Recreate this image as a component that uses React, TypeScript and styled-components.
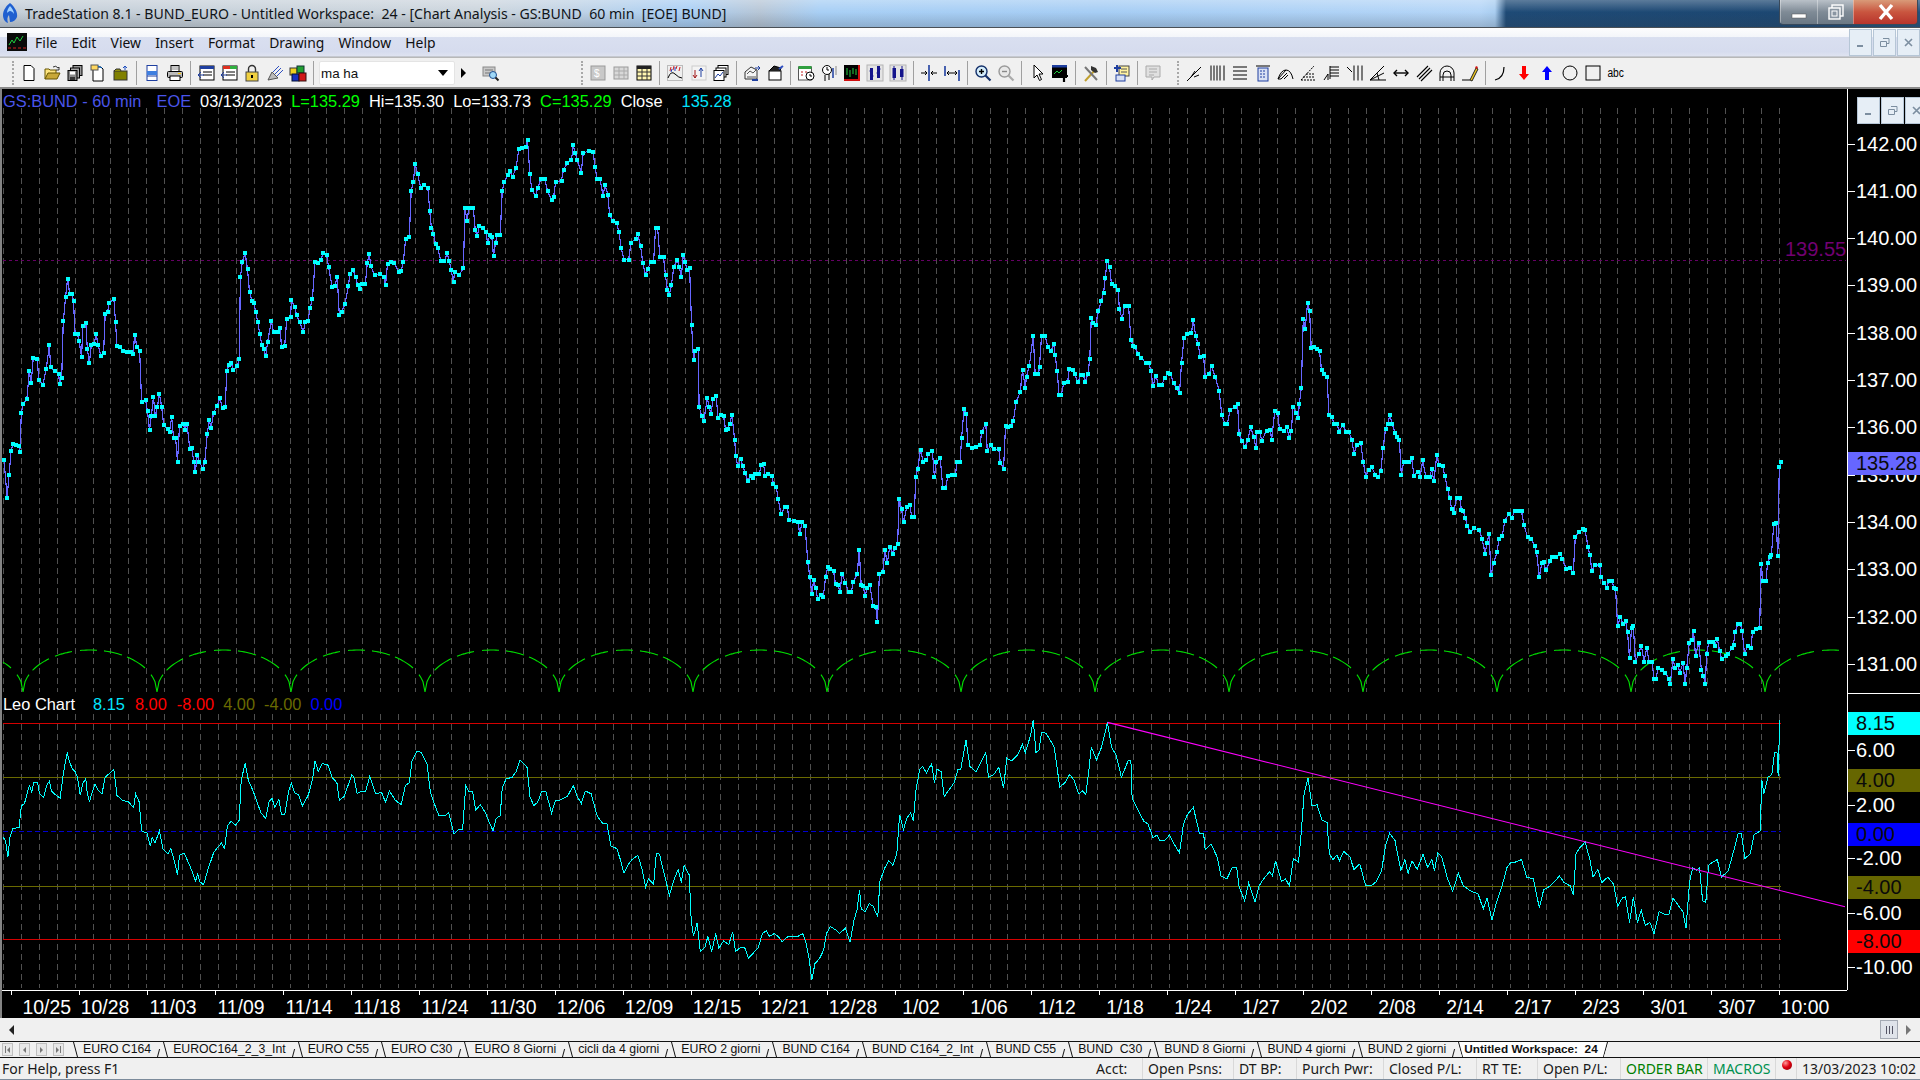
import React from 'react';
import styled, { createGlobalStyle } from 'styled-components';

const Global = createGlobalStyle`
  html, body { margin: 0; padding: 0; width: 1920px; height: 1080px; overflow: hidden; background: #000; }
  #root { width: 1920px; height: 1080px; }
  * { box-sizing: border-box; }
`;

const UI = '"Noto Sans", "Open Sans", sans-serif';
const ARIAL = '"Liberation Sans", Arial, sans-serif';

const Page = styled.div`
  width: 1920px; height: 1080px; display: flex; flex-direction: column; overflow: hidden;
  font-family: ${ARIAL};
`;

/* ---------- title bar ---------- */
const TitleBar = styled.div`
  height: 28px; flex: none; display: flex; align-items: center; position: relative; padding: 0 0 1px 2px;
  border-bottom: 1px solid #4a5056;
  background:
    linear-gradient(180deg, rgba(255,255,255,.28) 0, rgba(255,255,255,0) 45%, rgba(50,60,70,.22) 100%),
    linear-gradient(90deg, #c4ced8 0, #ccd5dd 480px, #c2d3e4 560px, #a9cff5 690px, #b7c6d6 760px, #a8cff5 820px, #a6cdf4 1100px, #b4d5f7 1480px, #a9cdf0 1495px, #1e4a76 1506px, #1c4772 1780px, #23507c 100%);
`;
const TitleIcon = styled.svg` width: 17px; height: 22px; flex: none; `;
const TitleText = styled.div`
  font-family: ${UI}; font-size: 14.1px; color: #101418; white-space: pre; margin-left: 6px;
`;
const WinControls = styled.div`
  margin-left: auto; display: flex; height: 25px; align-self: flex-start; margin-right: 2px;
  border: 1px solid #39495a; border-top: 0; border-radius: 0 0 4px 4px; overflow: hidden;
`;
const WinBtn = styled.div<{ $w: number; $close?: boolean }>`
  width: ${p => p.$w}px; height: 100%; display: flex; align-items: center; justify-content: center;
  border-left: 1px solid rgba(255,255,255,.35);
  background: ${p => p.$close
    ? 'linear-gradient(180deg, #d99a78 0, #c9553f 50%, #b8342c 100%)'
    : 'linear-gradient(180deg, #b9c1c8 0, #7f8b96 50%, #6b7884 100%)'};
  svg { width: 24px; height: 18px; }
`;

/* ---------- menu ---------- */
const MenuBar = styled.div`
  height: 29px; flex: none; display: flex; align-items: center; padding-left: 7px;
  background: linear-gradient(180deg, #fdfdfe 0, #f4f6fa 31%, #d9dff0 34%, #d6dcee 85%, #dfe3f0 100%);
  border-bottom: 1px solid #c4c8d0;
`;
const MenuIcon = styled.svg` width: 20px; height: 18px; flex: none; margin-right: 1px; `;
const MenuItem = styled.span`
  font-family: ${UI}; font-size: 13.9px; color: #101010; padding: 0 7.1px;
`;
const MdiGroup = styled.div<{ $top?: boolean }>`
  display: flex; gap: 1px;
  ${p => p.$top
    ? 'position: absolute; top: 8px; right: -8px; z-index: 3;'
    : 'margin-left: auto; height: 27px;'}
`;
const MdiBtn = styled.div`
  width: 23px; height: 27px; display: flex; align-items: center; justify-content: center;
  background: #e6eef6; border: 1px solid #b6c6d6;
  svg { width: 11px; height: 11px; }
`;

/* ---------- toolbar ---------- */
const ToolBar = styled.div`
  height: 32px; flex: none; display: flex; align-items: center; padding: 1px 0 0 9px;
  background: #f0f0f0; border-top: 1px solid #b8b8b8; border-bottom: 2px solid #8a8a8a;
`;
const Grip = styled.div<{ $ml?: number }>`
  width: 8px; height: 24px; flex: none; margin-left: ${p => p.$ml ?? 0}px; position: relative;
  &::before { content: ''; position: absolute; left: 3px; top: 0; bottom: 0; border-left: 2px dotted #a8a8a8; }
`;
const ToolBtn = styled.div`
  width: 23px; height: 24px; flex: none; display: flex; align-items: center; justify-content: center;
  svg { width: 18px; height: 18px; }
`;
const ToolSep = styled.div`
  width: 8px; height: 24px; flex: none; position: relative;
  &::before { content: ''; position: absolute; left: 4px; top: 0; bottom: 0; border-left: 1px solid #a0a0a0; }
`;
const Combo = styled.div`
  width: 136px; height: 24px; flex: none; margin-left: 2px; background: #fff; border-radius: 2px; border: 1px solid #e4e4e4;
  display: flex; align-items: center; justify-content: space-between; padding: 0 6px 0 1px;
  font-family: ${ARIAL}; font-size: 13.4px; color: #111;
  &::after { content: ''; border: 5px solid transparent; border-top: 6px solid #000; border-bottom: 0; }
`;
const ComboGo = styled.div`
  width: 16px; height: 24px; flex: none; margin-right: 8px; display: flex; align-items: center; justify-content: center;
  &::before { content: ''; border: 5px solid transparent; border-left: 5px solid #000; border-right: 0; }
`;

/* ---------- chart ---------- */
const Chart = styled.div`
  height: 929px; flex: none; background: #000; border-left: 2px solid #848484; position: relative;
  display: flex; flex-direction: column;
`;
const PlotRow = styled.div` height: 901px; flex: none; display: flex; `;
const Canvas = styled.div` width: 1845px; flex: none; position: relative; `;
const CanvasSvg = styled.svg` display: block; width: 1845px; height: 901px; `;
const Legend = styled.div<{ $top: number }>`
  position: absolute; left: 1px; top: ${p => p.$top}px; height: 22px; display: flex; align-items: center;
  font-size: 16.4px; white-space: pre;
`;
const LegendItem = styled.span<{ $c: string; $ml: number }>` color: ${p => p.$c}; margin-left: ${p => p.$ml}px; `;
const LevelTag = styled.div`
  position: absolute; left: 1783px; top: 148px; font-size: 20px; line-height: 24px; color: #720072;
`;
const YAxis = styled.div`
  width: 73px; flex: none; position: relative; border-left: 1px solid #fff;
`;
const AxisDivider = styled.div` position: absolute; left: 0; right: 0; top: 604px; border-top: 1px solid #fff; `;
const AxisLabel = styled.div<{ $bg?: string }>`
  position: absolute; left: 0; right: 0; height: 23px; padding-left: 8px; font-size: 20px; line-height: 23px; white-space: pre;
  color: ${p => (p.$bg ? '#0a0a0a' : '#fff')};
  background: ${p => p.$bg ?? 'transparent'};
  ${p => (p.$bg ? '' : `&::before { content: ''; position: absolute; left: 0; top: 11px; width: 7px; border-top: 1px solid #fff; }`)}
`;
const XAxisRow = styled.div`
  width: 1845px; height: 28px; flex: none; display: flex; padding-left: 1px; border-top: 1px solid #fff;
`;
const XCell = styled.div`
  width: 68px; flex: none; position: relative; text-align: center; color: #fff; font-size: 19.4px; line-height: 32px; white-space: nowrap;
  &:first-child { text-align: right; }
  &::before { content: ''; position: absolute; left: 8px; top: 0; height: 4px; border-left: 1px solid #fff; }
`;

/* ---------- scroll / tabs / status ---------- */
const HScroll = styled.div`
  height: 23px; flex: none; background: #f0f0f0; display: flex; align-items: center; padding: 0 9px;
`;
const ScrollLeft = styled.div` border: 5px solid transparent; border-right: 5px solid #222; border-left: 0; `;
const ScrollThumb = styled.div`
  margin-left: auto; width: 18px; height: 19px; background: #dfe3ea; border: 1px solid #a4aab4; display: flex; align-items: center; justify-content: center; gap: 2px;
  i { display: block; width: 1px; height: 8px; background: #556; }
`;
const ScrollRight = styled.div` margin: 0 0 0 8px; border: 5px solid transparent; border-left: 5px solid #777; border-right: 0; `;
const TabsBar = styled.div`
  height: 17px; flex: none; display: flex; background: #f0f0f0; border-top: 1px solid #111; border-bottom: 1px solid #111;
`;
const TabNav = styled.div` width: 72px; flex: none; display: flex; align-items: center; padding-left: 2px; gap: 6px; `;
const NavBtn = styled.div<{ $dir: 'l' | 'r'; $bar?: 'l' | 'r' }>`
  width: 11px; height: 13px; background: #e8e8e8; border: 1px solid #c0c0c0; display: flex; align-items: center; justify-content: center; gap: 1px;
  flex-direction: ${p => (p.$bar === 'r' ? 'row-reverse' : 'row')};
  &::after { content: ''; border: 3px solid transparent; ${p => (p.$dir === 'l' ? 'border-right: 3px solid #777; border-left: 0;' : 'border-left: 3px solid #777; border-right: 0;')} }
  ${p => (p.$bar ? `&::before { content: ''; width: 1px; height: 7px; background: #777; }` : '')}
`;
const Tab = styled.div<{ $active?: boolean }>`
  position: relative; padding: 0 ${p => (p.$active ? '11px 0 7px' : '11px')}; font-size: ${p => (p.$active ? 11.8 : 12.28)}px; line-height: 15px; white-space: pre; color: #111;
  font-weight: ${p => (p.$active ? 700 : 400)};
  ${p => (p.$active ? 'background: #fff; clip-path: polygon(0 0, 100% 0, calc(100% - 5px) 100%, 5px 100%);' : '')}
  &::before { content: ''; position: absolute; left: 3px; top: 0; height: 100%; border-left: 1px solid #111; transform: skewX(15deg); }
  &::after { content: ''; position: absolute; right: 3px; bottom: 0; height: ${p => (p.$active ? '100%' : '55%')}; border-left: 1px solid #111; transform: skewX(-15deg); }
`;
const StatusBar = styled.div`
  height: 22px; flex: none; display: flex; align-items: center; background: #f0f0f0; border-bottom: 1px solid #7c8b9b;
  font-family: ${UI}; font-size: 14px; color: #1a1a1a;
`;
const StatusHelp = styled.div` padding-left: 2px; margin-right: auto; white-space: nowrap; `;
const StatusCell = styled.div<{ $w: number; $c?: string }>`
  width: ${p => p.$w}px; height: 100%; flex: none; display: flex; align-items: center; padding-left: 5px; white-space: nowrap;
  color: ${p => p.$c ?? '#1a1a1a'};
  border-right: 1px solid #d9d9d9;
  &:last-child { border-right: 0; }
`;
const Led = styled.div`
  width: 10px; height: 10px; border-radius: 50%; margin: -8px 0 0 1px;
  background: radial-gradient(circle at 35% 30%, #ff9a9a 0, #e00010 45%, #800008 100%);
`;

/* ---------- icons ---------- */
const S = (p: any) => <path fill="none" stroke="#000" {...p} />;
const CandleBg = <rect x="1" y="1" width="16" height="16" fill="#e4e4e4" stroke="#b4b4b4" />;
const ICONS: Record<string, React.ReactNode> = {
  new: <path d="M4 1.5h7l3 3v12H4z" fill="#fff" stroke="#000" />,
  open: <><path d="M2 15V5h4l1 1h6v3" fill="#ffe680" stroke="#665500" /><path d="M2 15l3-6h12l-3 6z" fill="#c8a838" stroke="#665500" /><path d="M10 3q3-2 5 1l1-1v3h-3" fill="none" stroke="#333" /></>,
  save: <><rect x="7" y="1.5" width="9" height="10" fill="#999" stroke="#000" /><rect x="4.5" y="4" width="9" height="10" fill="#aaa" stroke="#000" /><rect x="2" y="6.5" width="9" height="10" fill="#888" stroke="#000" /><rect x="4" y="7.5" width="5" height="3" fill="#fff" /><rect x="4" y="13" width="5" height="3" fill="#333" /></>,
  note: <><path d="M4 3h8l2 2v12H4z" fill="#fff" stroke="#000" /><rect x="2" y="1" width="7" height="5" fill="#ffd860" stroke="#555" /><path d="M9 2l4 2" stroke="#06c" /></>,
  arch: <><rect x="2" y="7" width="13" height="9" fill="#808000" stroke="#333" /><path d="M2 7l2-2h4l1 2" fill="#909010" stroke="#333" /><path d="M13 6V2m-2 2l2-2 2 2" stroke="#2050c0" fill="none" /></>,
  prev: <><rect x="4" y="1.5" width="10" height="15" fill="#fff" stroke="#1f3fa0" /><rect x="4" y="7" width="10" height="4" fill="#3f7fe0" /><path d="M4 12h10" stroke="#1f3fa0" /></>,
  print: <><rect x="5" y="1.5" width="8" height="6" fill="#fff" stroke="#000" /><path d="M5 3h8M5 5h8" stroke="#888" /><rect x="1.5" y="7.5" width="15" height="6" rx="1" fill="#bbb" stroke="#000" /><rect x="4" y="12" width="10" height="4.5" fill="#fff" stroke="#000" /><rect x="12" y="9" width="3" height="1" fill="#fc0" /></>,
  win1: <><rect x="3" y="2" width="14" height="14" fill="#fff" stroke="#000" /><rect x="3" y="2" width="14" height="3" fill="#1f3fa0" /><path d="M6 8h9M6 11h9" stroke="#000" /><path d="M1 11h6M1 11l3-3M1 11l3 3" stroke="#1f3fa0" fill="none" /></>,
  win2: <><rect x="3" y="2" width="14" height="14" fill="#fff" stroke="#000" /><rect x="3" y="2" width="7" height="3" fill="#e03020" /><rect x="10" y="2" width="7" height="3" fill="#30b040" /><path d="M6 8h9M6 11h9" stroke="#000" /><path d="M1 11h6M1 11l3-3M1 11l3 3" stroke="#1f3fa0" fill="none" /></>,
  lock: <><path d="M5.5 8V5a3.5 3.5 0 017 0v3" fill="none" stroke="#333" strokeWidth="1.4" /><rect x="3" y="8" width="12" height="9" fill="#f0d040" stroke="#444" /><rect x="8" y="11" width="2" height="3" fill="#000" /></>,
  sat: <><path d="M2 16l4-8 6 6z" fill="#bbb" stroke="#555" /><path d="M7 8l6-6M9 10l6-6M11 12l6-6" stroke="#2f4fc0" /></>,
  cubes: <><rect x="1" y="4" width="7" height="7" fill="#f0d020" stroke="#333" /><rect x="8" y="2" width="7" height="7" fill="#20a030" stroke="#133" /><rect x="3" y="10" width="7" height="7" fill="#1830c0" stroke="#013" /><rect x="10" y="9" width="7" height="8" fill="#d01818" stroke="#311" /></>,
  find: <><rect x="1" y="3" width="12" height="9" fill="#c8c8c8" stroke="#888" /><path d="M3 6h8M3 9h8" stroke="#777" /><circle cx="11" cy="11" r="3.5" fill="#9fd8f8" stroke="#1f4f90" /><path d="M13.5 13.5l3 3" stroke="#222" strokeWidth="2" /></>,
  gcalc: <><rect x="2" y="2" width="14" height="14" fill="#c8c8c8" stroke="#999" /><text x="5" y="13" fontSize="10" fill="#fff" fontFamily="Liberation Sans">$</text></>,
  gtab: <><rect x="2" y="3" width="14" height="12" fill="#d8d8d8" stroke="#999" /><path d="M2 7h14M2 11h14M7 3v12M12 3v12" stroke="#aaa" /></>,
  ytab: <><rect x="2" y="2" width="14" height="14" fill="#fff6b0" stroke="#000" /><rect x="2" y="2" width="14" height="3" fill="#222" /><path d="M2 8h14M2 12h14M7 5v11M12 5v11" stroke="#333" /></>,
  wave: <><rect x="1.5" y="1.5" width="15" height="15" fill="#eee" stroke="#bbb" /><path d="M2 14q3-8 7-4t7 4" stroke="#000" fill="none" /><path d="M4 7l1-4M7 6l1-4M10 5l1-3M13 7l1-4" stroke="#d02020" /><path d="M5 8l1-3M9 7l0-4" stroke="#2040c0" /></>,
  updn: <><rect x="3" y="2" width="14" height="14" fill="#f4f4f4" stroke="#ccc" /><path d="M6 6v8m-2-3l2 3 2-3" stroke="#a01818" fill="none" /><path d="M12 13V4m-2 3l2-3 2 3" stroke="#1f3fa0" fill="none" /></>,
  stack: <><rect x="6" y="1.5" width="10" height="9" fill="#fff" stroke="#000" /><rect x="4" y="4" width="10" height="9" fill="#fff" stroke="#000" /><rect x="2" y="6.5" width="10" height="10" fill="#fff" stroke="#000" /><path d="M3 14l3-4 2 2 3-4" stroke="#1f3fa0" fill="none" /></>,
  dchart: <><path d="M2 8l6-5 6 3v9H2z" fill="#f4f4f4" stroke="#333" /><path d="M4 10l3-3 3 2 3-3M4 13h9" stroke="#555" fill="none" /><path d="M12 4h5m-2-2l2 2-2 2" stroke="#1f3fa0" fill="none" /><path d="M9 16h6" stroke="#1f3fa0" strokeWidth="2" /></>,
  dbox: <><rect x="3" y="7" width="12" height="9" fill="#fff" stroke="#000" /><path d="M3 7l5-5 7 2-1 3" fill="#222" stroke="#000" /><path d="M13 5l4-3" stroke="#2f4fc0" strokeWidth="2" /></>,
  cal: <><rect x="1.5" y="3" width="13" height="13" fill="#fff" stroke="#555" /><rect x="1.5" y="2" width="13" height="3" fill="#30a040" /><path d="M4 8h2M8 8h2M4 11h2" stroke="#c02020" /><circle cx="13" cy="12" r="4" fill="#fff" stroke="#000" /><path d="M13 10v2h2" stroke="#000" fill="none" /></>,
  clock: <><circle cx="7" cy="6" r="4.5" fill="#fff" stroke="#000" /><path d="M7 3v3h2" stroke="#000" fill="none" /><path d="M5 11v6M9 10v6" stroke="#000" /><path d="M13 4v10" stroke="#1f3fa0" strokeWidth="1.5" /><path d="M16 2v9" stroke="#888" /></>,
  blk: <><rect x="1" y="1" width="16" height="16" fill="#000" /><rect x="15" y="1" width="2" height="16" fill="#d01010" /><rect x="1" y="15" width="16" height="2" fill="#d01010" /><path d="M4 4v7M7 6v7M10 4v6M13 5v6" stroke="#20d040" /></>,
  bars: <>{CandleBg}<path d="M5.5 4v12M12.5 2v12" stroke="#14148c" strokeWidth="3" /><path d="M3.5 7h2M12.5 5h2M5.5 12h2M10.5 9h2" stroke="#14148c" /></>,
  cand: <>{CandleBg}<rect x="3.5" y="4" width="3.5" height="10" fill="#14148c" /><rect x="11" y="5" width="3.5" height="8" fill="#14148c" /><path d="M5 2v14M13 2v14" stroke="#14148c" /></>,
  pull: <><path d="M9 1v16" stroke="#1f3fa0" strokeWidth="1.6" /><path d="M1 9h6M5 7l2 2-2 2M17 9h-6M13 7l-2 2 2 2" stroke="#000" fill="none" /></>,
  push: <><path d="M2 2v10M16 6v11" stroke="#1f3fa0" strokeWidth="1.6" /><path d="M4 9h5M6 7L4 9l2 2M14 9H9M12 7l2 2-2 2" stroke="#000" fill="none" /></>,
  zin: <><circle cx="7.5" cy="7.5" r="5.5" fill="#d4ecfa" stroke="#14306a" strokeWidth="1.4" /><path d="M5 7.5h5M7.5 5v5" stroke="#000" strokeWidth="1.4" /><path d="M11.5 11.5l5 5" stroke="#14306a" strokeWidth="2.2" /></>,
  zout: <><circle cx="7.5" cy="7.5" r="5.5" fill="#e8e8e8" stroke="#9a9a9a" strokeWidth="1.4" /><path d="M5 7.5h5" stroke="#888" strokeWidth="1.4" /><path d="M11.5 11.5l5 5" stroke="#aaa" strokeWidth="2.2" /></>,
  arrow: <path d="M6 1v13l3-3 2.5 5.5 2-1L11 10h4z" fill="#fff" stroke="#000" />,
  blkt: <><rect x="1" y="2" width="15" height="12" fill="#000" /><rect x="1" y="1" width="15" height="2.5" fill="#1f3fa0" /><path d="M3 10l3-3 2 2 3-3" stroke="#20d040" fill="none" /><path d="M9 12h8M13 12v6" stroke="#000" strokeWidth="2.2" /></>,
  tools: <><path d="M3 17L14 5" stroke="#c0a030" strokeWidth="2" /><path d="M9 2l5 2 2 4-3 1-4-3z" fill="#333" /><path d="M3 3l12 13" stroke="#777" strokeWidth="2" /></>,
  plusdoc: <><rect x="6" y="2" width="10" height="10" fill="#fff2a0" stroke="#444" /><path d="M8 5h6M8 8h6" stroke="#555" /><path d="M4 1v7M1 4h7" stroke="#1f3fa0" strokeWidth="2" /><rect x="3" y="11" width="9" height="6" fill="#d8e0f4" stroke="#1f3fa0" /></>,
  chat: <><path d="M2 2h14v11h-6l-2 3v-3H2z" fill="#e0e0e0" stroke="#aaa" /><path d="M5 5h8M5 8h8M5 11h5" stroke="#aaa" /></>,
  fork: <S d="M2 17L16 3M6 13l4-6M9 13l5-2" />,
  vlines: <S d="M3 1.5v15M6 1.5v15M9 1.5v15M12 1.5v15M16 1.5v15" />,
  hlines: <S d="M2 3h14M2 7h14M2 11h14M2 15h14" />,
  calc: <><path d="M2 2h14" stroke="#000" /><rect x="4" y="4" width="10" height="13" fill="#d8e0f4" stroke="#1f3fa0" /><path d="M6 7h6M6 10h6M6 13h6" stroke="#1f3fa0" strokeDasharray="2 1" /></>,
  fan: <S d="M1 15q3-9 8-9t7 9M1 15l8-9M4 15l6-6M7 15l4-4M1 15h3" />,
  tri: <S d="M1 16h15M1 16L14 2M3 13h11M6 10h8" strokeDasharray="2 1" />,
  retr: <S d="M1 16l4-6v6M7 3h9M7 6h9M7 9h9M7 12h9M7 2v13" />,
  gann: <S d="M1 3l5 5M8 1.5v15M12 1.5v15M16 1.5v15" />,
  ang: <S d="M1 16h16M1 16L15 2M1 16l14-7M8 9l2 7" />,
  lr: <><path d="M2 9h14" stroke="#000" strokeWidth="1.4" /><path d="M5 6L2 9l3 3M13 6l3 3-3 3" fill="none" stroke="#000" strokeWidth="1.4" /></>,
  par: <S d="M2 13L13 2M4 15L15 4M6 17L17 6" strokeWidth="1.1" />,
  arcs: <S d="M2 17V9a7 7 0 0114 0v8M5 17V11a4 4 0 018 0v6M2 13h14" />,
  pen: <><path d="M1 16h8" stroke="#000" /><path d="M9 16l6-12 2 1-6 12z" fill="#f0c820" stroke="#222" /><path d="M14 4l1-2 2 1-1 2" fill="#d01818" /></>,
  curve: <S d="M3 16q9-2 9-13" strokeWidth="1.2" />,
  rdown: <path d="M7 2h4v8h3l-5 6-5-6h3z" fill="#ff0000" />,
  bup: <path d="M7 16h4V8h3L9 2 4 8h3z" fill="#0000ff" />,
  circ: <circle cx="9" cy="9" r="7" fill="none" stroke="#000" />,
  sq: <rect x="2" y="2" width="14" height="14" fill="none" stroke="#000" />,
};

const Ico = ({ n }: { n: string }) => (
  <ToolBtn><svg viewBox="0 0 18 18">{ICONS[n]}</svg></ToolBtn>
);
const AbcText = styled.span` font-size: 12px; color: #000; transform: scaleX(.85); font-family: ${ARIAL}; `;

/* ---------- traced data ---------- */
const PRICE1 = '10,601 18,670 23,628 28,585 33,573 40,574 48,576 50,587 54,515 59,500 68,490 74,440 79,462 84,416 94,417 98,455 108,465 117,435 125,392 128,432 138,440 148,445 151,463 156,452 160,348 166,305 171,271 176,298 182,298 186,312 190,372 196,372 200,384 206,414 210,358 217,352 221,400 226,425 231,392 238,390 243,372 248,392 255,412 262,406 266,336 272,332 276,316 288,308 292,350 296,394 303,396 310,403 320,404 330,405 336,408 341,373 346,395 353,402 358,495 368,492 373,512 378,547 383,521 388,487 393,522 398,505 403,481 409,505 414,538 424,545 429,550 434,523 439,561 444,561 449,605 454,540 463,536 468,547 473,535 480,582 485,580 490,605 494,623 499,592 504,605 513,617 518,605 524,555 529,529 534,543 540,516 549,503 556,489 563,507 569,505 574,440 579,428 585,425 590,438 600,431 605,417 608,268 613,240 620,224 626,254 631,295 637,312 642,316 647,332 652,350 657,372 662,392 667,400 672,411 677,386 686,348 692,368 703,368 708,360 712,395 720,394 725,345 735,340 737,310 745,322 750,338 758,350 767,368 772,350 779,348 784,325 790,308 797,240 803,243 812,236 817,224 826,228 831,250 840,286 847,284 853,268 858,337 864,332 872,318 881,285 885,262 893,255 899,268 904,282 910,290 915,280 924,280 929,242 934,226 938,248 947,265 960,262 970,268 975,282 980,245 989,240 997,243 1008,258 1015,257 1020,240 1026,198 1035,195 1040,112 1045,95 1050,62 1056,80 1064,105 1073,100 1082,105 1087,148 1091,178 1096,190 1102,208 1107,215 1115,238 1124,238 1131,225 1136,238 1141,255 1147,277 1150,258 1160,265 1172,252 1176,142 1181,165 1186,142 1197,142 1202,183 1207,193 1212,175 1222,178 1228,185 1233,205 1239,192 1244,195 1248,230 1253,205 1258,192 1265,192 1270,112 1275,95 1285,82 1290,75 1296,85 1305,70 1312,35 1320,32 1330,30 1334,18 1340,80 1345,110 1355,120 1360,105 1368,90 1378,90 1385,112 1395,128 1400,122 1405,95 1420,92 1425,72 1435,60 1445,55 1450,28 1455,42 1460,55 1470,78 1475,42 1490,38 1500,40 1505,68 1510,90 1518,90 1525,120 1530,100 1537,118 1542,155 1550,165 1560,170 1565,185';
const PRICE2 = '3,215 10,237 22,236 28,205 40,198 45,190 52,212 58,243 65,265 70,254 78,240 85,240 90,178 95,178 101,232 110,232 115,265 120,292 125,300 130,283 136,250 145,236 150,250 155,267 160,228 165,240 170,255 176,252 181,355 186,420 190,402 198,400 200,505 207,522 212,530 221,488 225,505 230,517 236,490 243,484 248,525 256,520 262,522 267,547 273,545 278,535 283,520 290,565 293,595 298,613 305,600 310,612 317,625 323,640 330,630 335,635 342,627 352,627 357,610 363,608 367,630 375,627 384,630 388,645 395,650 400,672 407,700 417,688 423,688 428,710 440,713 450,715 455,737 460,715 468,722 475,788 480,815 485,845 490,820 495,835 500,855 508,848 514,852 520,815 525,797 532,800 540,803 545,828 552,830 556,843 562,810 570,825 578,843 585,843 590,823 600,810 605,765 610,830 615,832 620,850 625,835 632,830 640,868 647,870 651,897 656,810 665,805 670,765 676,790 682,760 690,772 695,762 702,755 706,672 712,690 717,715 725,688 733,683 738,706 744,706 748,632 753,618 760,583 767,605 775,602 780,590 790,586 795,632 800,605 810,598 816,652 823,652 830,630 840,628 848,628 853,605 860,605 864,562 870,508 875,518 880,575 890,580 900,578 910,575 915,550 925,535 929,585 937,575 945,582 958,582 962,607 970,617 975,540 980,542 988,540 995,530 1002,495 1012,478 1018,438 1025,470 1028,450 1035,430 1045,375 1050,445 1058,445 1061,432 1066,375 1075,375 1082,395 1090,402 1098,390 1100,410 1106,440 1110,483 1116,483 1122,462 1132,460 1136,436 1146,437 1150,445 1158,460 1165,447 1172,447 1176,460 1183,445 1188,418 1192,342 1197,352 1203,355 1210,330 1217,312 1223,297 1227,270 1232,238 1238,250 1243,280 1252,285 1260,292 1263,327 1270,345 1276,320 1286,320 1292,382 1297,393 1302,395 1310,408 1318,415 1330,425 1338,425 1343,440 1348,467 1355,448 1362,465 1370,465 1378,452 1385,443 1392,445 1400,462 1408,470 1415,480 1420,425 1426,380 1433,372 1445,370 1450,347 1456,375 1462,390 1467,413 1476,412 1480,450 1490,445 1496,430 1505,450 1515,475 1522,520 1530,535 1536,535 1543,510 1555,505 1562,500 1566,555';
const PRICE3 = '5,567 13,578 20,565 27,542 35,560 40,580 43,550 50,550 55,567 67,548 77,547 80,565 88,512 95,515 100,545 112,548 118,542 125,562 130,548 134,505 142,515 147,525 150,500 155,470 160,345 165,362 171,315 176,330 180,397 188,395 195,400 201,402 206,438 213,445 220,450 225,520 232,523 238,535 246,535 250,550 260,537 268,550 275,550 283,565 288,590 295,575 305,570 312,605 318,632 325,620 333,615 342,628 350,632 356,622 362,580 368,545 375,535 378,520 385,535 392,553 397,560 403,565 408,628 414,605 423,605 428,605 434,598 440,630 450,623 456,632 462,602 470,632 480,632 485,618 490,640 498,592 503,610 512,612 518,630 525,655 530,670 535,690 540,698 548,670 555,670 560,692 565,695 570,708 575,722 582,733 592,726 605,730 612,745 620,772 625,752 630,737 635,812 641,790 650,770 655,745 663,740 670,712 680,700 687,707 695,695 705,695 712,695 718,720 727,742 737,745 745,758 750,770 757,815 763,790 768,788 773,802 785,785 790,778 800,778 810,772 815,782 825,800 835,798 843,808 848,742 858,732 867,728 873,730 880,760 885,775 890,803 897,793 910,793 913,815 920,825 928,835 932,822 941,822 945,835 950,837 955,905 962,888 968,900 975,895 980,915 985,962 990,908 995,905 1000,970 1008,955 1015,940 1022,970 1028,945 1035,970 1042,970 1047,1000 1052,1000 1058,980 1067,985 1075,990 1085,1000 1088,1010 1095,965 1100,980 1108,975 1112,990 1120,972 1126,1010 1130,980 1136,935 1142,930 1147,913 1152,958 1160,935 1167,985 1172,995 1177,1010 1180,955 1186,933 1195,933 1200,940 1207,928 1213,950 1218,965 1228,958 1235,955 1243,945 1248,938 1252,915 1260,900 1265,900 1270,913 1276,955 1284,940 1292,945 1296,915 1305,910 1314,908 1318,792 1323,822 1330,822 1334,790 1340,778 1344,775 1350,718 1356,716 1360,776 1364,614 1369,605';

const OSC1 = '8,1290 14,1295 20,1325 25,1290 32,1273 48,1272 54,1232 62,1228 70,1205 75,1195 80,1208 85,1190 95,1190 100,1210 110,1217 118,1195 125,1187 130,1205 140,1212 152,1218 158,1185 163,1160 170,1135 175,1150 183,1165 190,1170 196,1180 203,1213 210,1190 217,1183 220,1205 226,1225 232,1210 240,1193 248,1203 258,1210 266,1180 278,1172 288,1166 296,1213 310,1222 325,1225 338,1235 343,1210 352,1225 358,1278 372,1282 380,1305 385,1290 392,1300 403,1278 412,1310 425,1320 432,1310 440,1330 449,1358 454,1322 465,1318 472,1328 485,1350 495,1370 500,1355 505,1370 515,1376 525,1350 532,1335 540,1318 548,1310 560,1300 568,1310 575,1268 585,1260 595,1268 605,1258 610,1185 620,1155 628,1185 640,1205 650,1225 660,1245 672,1255 680,1225 688,1218 695,1235 705,1220 712,1248 720,1248 730,1205 737,1190 745,1208 755,1212 765,1232 780,1212 790,1185 797,1150 805,1170 815,1155 830,1158 840,1180 852,1190 858,1222 870,1215 880,1195 890,1175 895,1180 903,1210 915,1205 925,1205 935,1178 950,1210 965,1208 975,1225 985,1205 1000,1222 1015,1230 1025,1195 1035,1190 1042,1150 1055,1132 1065,1135 1080,1155 1088,1205 1095,1222 1110,1250 1125,1250 1135,1245 1148,1283 1160,1275 1170,1275 1178,1195 1185,1205 1195,1205 1203,1240 1215,1230 1228,1245 1235,1258 1247,1278 1255,1255 1265,1250 1270,1200 1280,1183 1295,1180 1305,1170 1315,1148 1333,1162 1340,1215 1350,1232 1360,1225 1370,1205 1380,1205 1395,1245 1405,1222 1415,1222 1425,1218 1435,1215 1450,1195 1460,1215 1470,1228 1480,1205 1495,1210 1510,1250 1525,1265 1535,1265 1545,1305 1560,1310';
const OSC2 = '0,1328 10,1355 20,1340 30,1330 45,1322 55,1345 65,1380 72,1365 85,1375 92,1318 100,1320 108,1345 117,1372 125,1395 135,1370 147,1348 155,1372 162,1340 175,1358 180,1440 186,1470 195,1445 203,1497 215,1490 222,1470 232,1498 242,1465 250,1492 262,1478 275,1485 285,1462 292,1498 305,1490 315,1490 325,1510 338,1500 350,1490 360,1465 370,1460 378,1470 390,1465 400,1470 410,1480 425,1470 440,1470 450,1470 462,1465 470,1480 478,1510 485,1550 493,1520 505,1510 515,1495 522,1465 532,1452 545,1458 555,1465 570,1455 582,1480 592,1440 600,1420 606,1385 610,1420 620,1425 630,1410 640,1415 652,1435 657,1370 670,1345 680,1332 690,1340 700,1320 707,1248 717,1275 725,1255 735,1245 742,1260 748,1205 758,1165 765,1160 775,1172 788,1155 795,1190 802,1165 812,1170 820,1215 835,1200 845,1190 855,1165 862,1165 875,1112 885,1160 900,1170 915,1150 925,1135 932,1180 945,1175 958,1162 970,1200 978,1145 990,1150 1005,1140 1018,1120 1025,1135 1038,1105 1045,1075 1052,1135 1060,1130 1066,1098 1078,1100 1098,1125 1106,1165 1112,1198 1125,1190 1137,1175 1148,1185 1160,1210 1170,1205 1178,1212 1186,1165 1192,1125 1205,1148 1218,1125 1233,1080 1243,1125 1255,1140 1268,1180 1285,1150 1292,1150 1295,1218 1310,1240 1325,1260 1335,1265 1348,1290 1358,1285 1365,1295 1378,1295 1390,1285 1400,1300 1415,1318 1425,1265 1435,1248 1450,1235 1460,1265 1465,1282 1476,1282 1480,1312 1495,1302 1510,1325 1520,1360 1535,1365 1548,1345 1560,1345 1566,1380';
const OSC3 = '12,1405 22,1372 38,1408 48,1378 60,1365 75,1352 82,1360 90,1332 105,1370 115,1365 125,1378 135,1328 148,1335 155,1280 162,1210 172,1182 182,1232 195,1230 207,1258 220,1262 226,1320 235,1330 245,1322 252,1332 262,1315 278,1325 288,1348 303,1338 318,1378 332,1378 345,1370 358,1350 368,1305 378,1282 392,1295 407,1350 417,1330 425,1355 435,1332 448,1348 463,1320 475,1345 485,1330 492,1350 500,1318 510,1325 525,1365 538,1388 552,1355 565,1378 585,1388 602,1392 615,1420 625,1400 637,1440 650,1405 662,1380 675,1345 685,1335 695,1335 712,1330 725,1362 742,1365 757,1418 768,1385 785,1378 808,1360 820,1372 835,1378 843,1395 850,1318 860,1308 873,1298 885,1330 893,1362 905,1348 915,1372 930,1362 945,1375 955,1415 967,1400 975,1398 985,1445 995,1398 1005,1445 1015,1422 1025,1450 1037,1445 1047,1465 1060,1425 1075,1430 1085,1430 1095,1400 1110,1415 1120,1425 1128,1455 1137,1370 1145,1345 1155,1350 1162,1345 1170,1405 1178,1408 1185,1340 1195,1335 1207,1330 1218,1362 1235,1350 1250,1310 1260,1282 1268,1282 1277,1328 1290,1320 1300,1285 1315,1278 1320,1185 1325,1210 1335,1180 1345,1175 1352,1135 1358,1135 1361,1178 1365,1075';

const KX = 2.529, KY = 1.823;
const toPts = (src: string, x0: number) =>
  src.split(' ').map(s => {
    const [a, b] = s.split(',').map(Number);
    return [+(x0 + a / KX).toFixed(1), +(130 + b / KY).toFixed(1)] as [number, number];
  });
const price = [...toPts(PRICE1, 0), ...toPts(PRICE2, 620), ...toPts(PRICE3, 1240)];
const osc = [...toPts(OSC1, 0), ...toPts(OSC2, 620), ...toPts(OSC3, 1240)];
const lineD = (pts: [number, number][]) => 'M' + pts.map(p => p.join(' ')).join('L');
const dotsD = price.map(([x, y]) => `M${Math.round(x - 2)} ${Math.round(y - 2)}h4v4h-4z`).join('');

const gridXs = Array.from({ length: 100 }, (_, k) => +(3.3 + 17.94 * k).toFixed(1));

const arcY = (d: number) => {
  const m = d > 134 ? d - 134 : d < 0 ? d + 134 : d;
  const t = Math.min(1, Math.abs(m - 67) / 67);
  return 650 + 42 * (1 - Math.sqrt(1 - t * t));
};
const SEGS: [number, number][] = [[9.6, 26], [32, 49], [57, 74], [81, 99], [104, 122], [128, 140]];
const cycleD = (() => {
  let out = '';
  for (let k = -1; k <= 13; k++) {
    const v = 23 + 134 * k;
    for (const [a, b] of SEGS) {
      if (v + b < 3) continue;
      if (k === 13 && a > 60) continue;
      const pts: string[] = [];
      const parts = [a];
      for (let d = Math.ceil(a); d < b; d += 2) parts.push(d);
      if (a < 134 && b > 134) parts.push(134);
      parts.push(b);
      parts.sort((p, q) => p - q);
      for (const d of parts) if (v + d >= 3) pts.push(`${(v + d).toFixed(1)} ${arcY(d).toFixed(1)}`);
      if (pts.length > 1) out += 'M' + pts.join('L');
    }
  }
  return out;
})();

const priceY = (c: number) => 664.8 + (131 - c) * 47.3;
const PRICE_LABELS = [142, 141, 140, 139, 138, 137, 136, 135, 134, 133, 132, 131];
const OSC_LABELS: { t: string; c: number; bg?: string }[] = [
  { t: '6.00', c: 751 },
  { t: '2.00', c: 806 },
  { t: '-2.00', c: 859 },
  { t: '-6.00', c: 914 },
  { t: '-10.00', c: 968 },
  { t: '8.15', c: 723.5, bg: '#00ffff' },
  { t: '4.00', c: 780.5, bg: '#666600' },
  { t: '0.00', c: 834.5, bg: '#0000ff' },
  { t: '-4.00', c: 888, bg: '#666600' },
  { t: '-8.00', c: 942, bg: '#ff0000' },
];
const X_LABELS = ['10/25', '10/28', '11/03', '11/09', '11/14', '11/18', '11/24', '11/30', '12/06', '12/09', '12/15', '12/21', '12/28', '1/02', '1/06', '1/12', '1/18', '1/24', '1/27', '2/02', '2/08', '2/14', '2/17', '2/23', '3/01', '3/07', '10:00'];
const TABS = ['EURO C164', 'EUROC164_2_3_Int', 'EURO C55', 'EURO C30', 'EURO 8 Giorni', 'cicli da 4 giorni', 'EURO 2 giorni', 'BUND C164', 'BUND C164_2_Int', 'BUND C55', 'BUND  C30', 'BUND 8 Giorni', 'BUND 4 giorni', 'BUND 2 giorni'];
const MENUS = ['File', 'Edit', 'View', 'Insert', 'Format', 'Drawing', 'Window', 'Help'];
const STATUS: [string, number, string?][] = [
  ['Acct:', 52], ['Open Psns:', 91], ['DT BP:', 63], ['Purch Pwr:', 87], ['Closed P/L:', 93], ['RT TE:', 61], ['Open P/L:', 83],
  ['ORDER BAR', 87, '#008000'], ['MACROS', 68, '#009050'],
];

const MdiButtons = () => (
  <>
    <MdiBtn><svg viewBox="0 0 11 11"><rect x="2" y="8" width="6" height="2" fill="#7c8ea0" /></svg></MdiBtn>
    <MdiBtn><svg viewBox="0 0 11 11"><path d="M4 1.5h6v5H8M1.5 4.5h6v5h-6z" fill="none" stroke="#7c8ea0" /></svg></MdiBtn>
    <MdiBtn><svg viewBox="0 0 11 11"><path d="M2 2l7 7M9 2l-7 7" stroke="#7c8ea0" strokeWidth="1.6" /></svg></MdiBtn>
  </>
);

export default function App() {
  return (
    <Page>
      <Global />
      <TitleBar>
        <TitleIcon viewBox="0 0 17 22">
          <path d="M8 1c-3 2-7 7-7 12 0 4 2 7 5 8-1-3-1-6 1-8l1 7c3 0 6-2 7-5 1-4-2-10-7-14z" fill="#1f5fd0" />
          <path d="M8 4c-2 2-3 5-3 7 1-1 2-2 3-2s3 1 4 3c0-3-2-6-4-8z" fill="#9fd0ff" />
        </TitleIcon>
        <TitleText>{'TradeStation 8.1 - BUND_EURO - Untitled Workspace:  24 - [Chart Analysis - GS:BUND  60 min  [EOE] BUND]'}</TitleText>
        <WinControls>
          <WinBtn $w={37}><svg viewBox="0 0 24 18"><rect x="5" y="11" width="14" height="4" fill="#fff" stroke="#555" strokeWidth=".5" /></svg></WinBtn>
          <WinBtn $w={36}><svg viewBox="0 0 24 18"><rect x="8" y="2" width="11" height="11" fill="none" stroke="#fff" strokeWidth="1.4" /><rect x="5" y="5" width="11" height="11" fill="#8a96a2" stroke="#fff" strokeWidth="1.4" /><rect x="8" y="8" width="5" height="5" fill="none" stroke="#fff" /></svg></WinBtn>
          <WinBtn $w={64} $close><svg viewBox="0 0 24 18"><path d="M6 2l12 14M18 2L6 16" stroke="#fff" strokeWidth="3.4" /></svg></WinBtn>
        </WinControls>
      </TitleBar>

      <MenuBar>
        <MenuIcon viewBox="0 0 20 18">
          <rect width="20" height="18" fill="#0a0a0a" />
          <path d="M2 12l3-5 2 3 3-6 3 4 3-5" stroke="#20d040" fill="none" />
          <path d="M1 15h18" stroke="#d02020" strokeDasharray="3 2" />
        </MenuIcon>
        {MENUS.map(m => <MenuItem key={m}>{m}</MenuItem>)}
        <MdiGroup><MdiButtons /></MdiGroup>
      </MenuBar>

      <ToolBar>
        <Grip />
        <Ico n="new" /><Ico n="open" /><Ico n="save" /><Ico n="note" /><Ico n="arch" />
        <ToolSep />
        <Ico n="prev" /><Ico n="print" />
        <ToolSep />
        <Ico n="win1" /><Ico n="win2" /><Ico n="lock" /><Ico n="sat" /><Ico n="cubes" />
        <ToolSep />
        <Combo>ma ha</Combo>
        <ComboGo />
        <Ico n="find" />
        <Grip $ml={76} />
        <Ico n="gcalc" /><Ico n="gtab" /><Ico n="ytab" />
        <ToolSep />
        <Ico n="wave" /><Ico n="updn" /><Ico n="stack" />
        <ToolSep />
        <Ico n="dchart" /><Ico n="dbox" />
        <ToolSep />
        <Ico n="cal" /><Ico n="clock" /><Ico n="blk" /><Ico n="bars" /><Ico n="cand" />
        <ToolSep />
        <Ico n="pull" /><Ico n="push" />
        <ToolSep />
        <Ico n="zin" /><Ico n="zout" />
        <ToolSep />
        <Ico n="arrow" /><Ico n="blkt" />
        <ToolSep />
        <Ico n="tools" />
        <ToolSep />
        <Ico n="plusdoc" />
        <ToolSep />
        <Ico n="chat" />
        <Grip $ml={10} />
        <Ico n="fork" /><Ico n="vlines" /><Ico n="hlines" /><Ico n="calc" /><Ico n="fan" /><Ico n="tri" /><Ico n="retr" /><Ico n="gann" /><Ico n="ang" /><Ico n="lr" /><Ico n="par" /><Ico n="arcs" /><Ico n="pen" />
        <ToolSep />
        <Ico n="curve" /><Ico n="rdown" /><Ico n="bup" /><Ico n="circ" /><Ico n="sq" />
        <ToolBtn><AbcText>abc</AbcText></ToolBtn>
      </ToolBar>

      <Chart>
        <PlotRow>
          <Canvas>
            <CanvasSvg viewBox="2 89 1845 901">
              <g shapeRendering="crispEdges" stroke="#505050" strokeDasharray="6 4">
                {gridXs.map(x => <path key={x} d={`M${x} 108V692M${x} 714V988`} />)}
              </g>
              <g shapeRendering="crispEdges">
                <path d="M3 260.5H1846" stroke="#660066" strokeDasharray="3 3" />
                <path d="M3 723.5H1781M3 939.5H1781" stroke="#d40000" />
                <path d="M3 777.5H1781M3 886H1781" stroke="#6a6a00" />
                <path d="M3 831.5H1781" stroke="#0000d0" strokeDasharray="5 3" />
              </g>
              <path d={cycleD} fill="none" stroke="#00e000" strokeWidth="1.1" />
              <path d={lineD(price)} fill="none" stroke="#6666ff" strokeWidth="1.2" shapeRendering="crispEdges" />
              <path d={dotsD} fill="#00ffff" shapeRendering="crispEdges" />
              <path d={lineD(osc)} fill="none" stroke="#00ffff" strokeWidth="1" shapeRendering="crispEdges" />
              <path d="M1107.5 722.4L1845 906.8" stroke="#ff00ff" strokeWidth="1.1" />
            </CanvasSvg>
            <Legend $top={1}>
              <LegendItem $c="#4a55ea" $ml={0}>GS:BUND - 60 min</LegendItem>
              <LegendItem $c="#4a55ea" $ml={15}>EOE</LegendItem>
              <LegendItem $c="#fff" $ml={9}>03/13/2023</LegendItem>
              <LegendItem $c="#00ff00" $ml={9}>L=135.29</LegendItem>
              <LegendItem $c="#fff" $ml={9}>Hi=135.30</LegendItem>
              <LegendItem $c="#fff" $ml={9}>Lo=133.73</LegendItem>
              <LegendItem $c="#00ff00" $ml={9}>C=135.29</LegendItem>
              <LegendItem $c="#fff" $ml={9}>Close</LegendItem>
              <LegendItem $c="#00e5ff" $ml={19}>135.28</LegendItem>
            </Legend>
            <Legend $top={604}>
              <LegendItem $c="#fff" $ml={0}>Leo Chart</LegendItem>
              <LegendItem $c="#00e5ff" $ml={18}>8.15</LegendItem>
              <LegendItem $c="#ff0000" $ml={10}>8.00</LegendItem>
              <LegendItem $c="#ff0000" $ml={10}>-8.00</LegendItem>
              <LegendItem $c="#6a6a00" $ml={9}>4.00</LegendItem>
              <LegendItem $c="#6a6a00" $ml={9}>-4.00</LegendItem>
              <LegendItem $c="#0000ff" $ml={9}>0.00</LegendItem>
            </Legend>
            <LevelTag>139.55</LevelTag>
          </Canvas>
          <YAxis>
            {PRICE_LABELS.map(p => (
              <AxisLabel key={p} style={{ top: priceY(p) - 89 - 12 }}>{p.toFixed(2)}</AxisLabel>
            ))}
            <AxisLabel $bg="#6666ff" style={{ top: 452 - 89 }}>135.28</AxisLabel>
            <AxisDivider />
            {OSC_LABELS.map(o => (
              <AxisLabel key={o.t} $bg={o.bg} style={{ top: o.c - 89 - 12 }}>{o.t}</AxisLabel>
            ))}
            <MdiGroup $top><MdiButtons /></MdiGroup>
          </YAxis>
        </PlotRow>
        <XAxisRow>
          {X_LABELS.map(l => <XCell key={l}>{l}</XCell>)}
        </XAxisRow>
      </Chart>

      <HScroll>
        <ScrollLeft />
        <ScrollThumb><i /><i /><i /></ScrollThumb>
        <ScrollRight />
      </HScroll>

      <TabsBar>
        <TabNav>
          <NavBtn $dir="l" $bar="l" /><NavBtn $dir="l" /><NavBtn $dir="r" /><NavBtn $dir="r" $bar="r" />
        </TabNav>
        {TABS.map(t => <Tab key={t}>{t}</Tab>)}
        <Tab $active>{'Untitled Workspace:  24'}</Tab>
      </TabsBar>

      <StatusBar>
        <StatusHelp>For Help, press F1</StatusHelp>
        {STATUS.map(([t, w, c]) => <StatusCell key={t} $w={w} $c={c}>{t}</StatusCell>)}
        <StatusCell $w={21}><Led /></StatusCell>
        <StatusCell $w={123}>13/03/2023 10:02</StatusCell>
      </StatusBar>
    </Page>
  );
}
